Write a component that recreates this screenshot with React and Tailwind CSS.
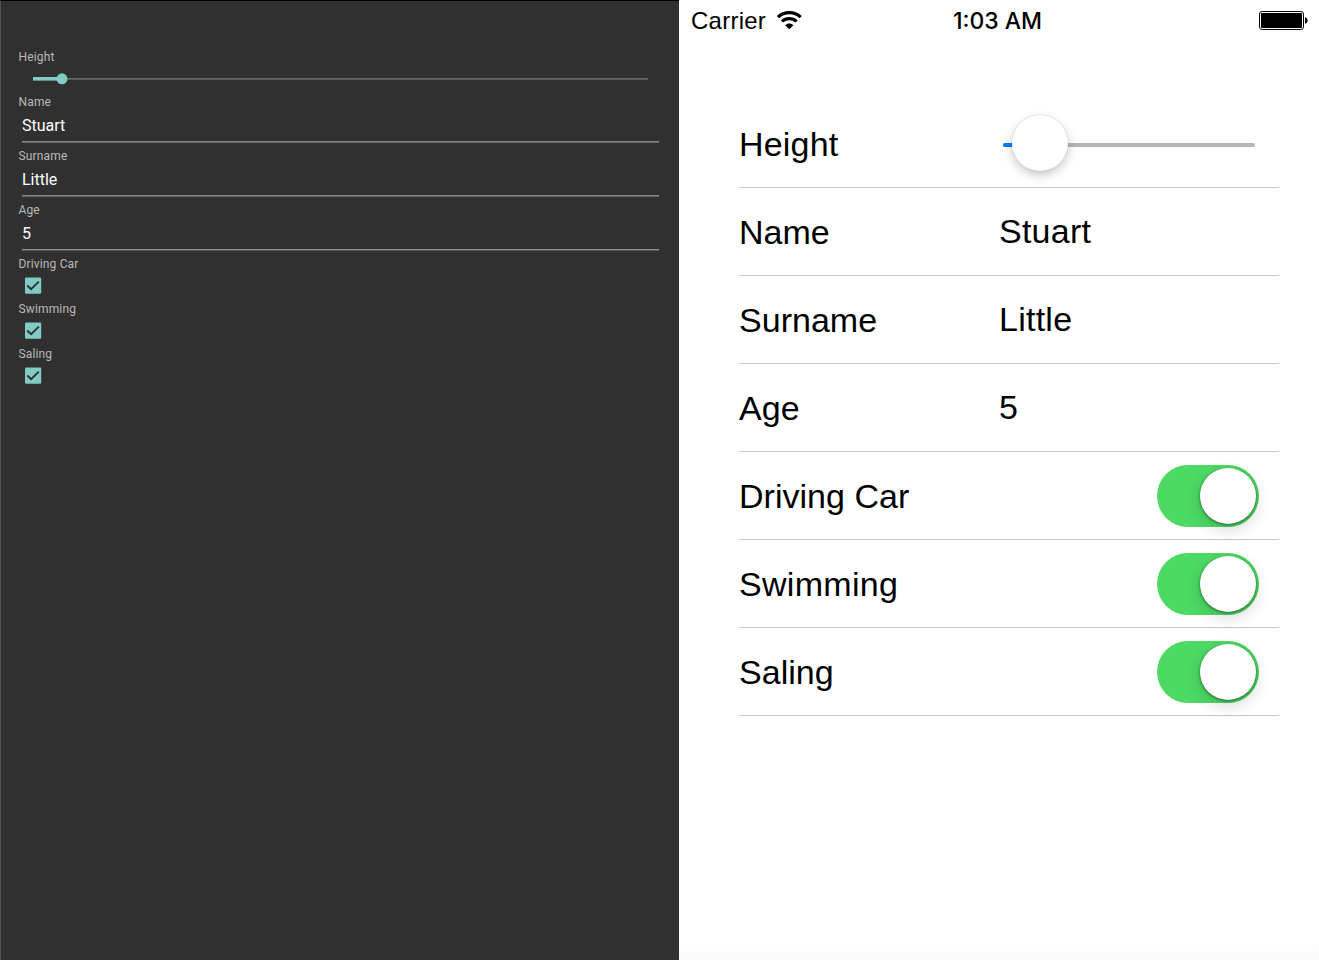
const sans = "font-['Liberation_Sans',Arial,sans-serif]";

function DroidLabel({ children }) {
  return <div className="-ml-[0.5px] h-4 text-[12px] leading-4 tracking-[0.15px] text-[#b9b9b9]">{children}</div>;
}

function DroidField({ label, value, line }) {
  return (
    <div className="h-[54px]">
      <DroidLabel>{label}</DroidLabel>
      <div className="ml-[3px] h-[31px] pt-[4px] text-[16px] leading-6 text-white">{value}</div>
      <div className={`ml-[3px] h-[2px] w-[637px] border-b ${line}`} />
    </div>
  );
}

function DroidCheck({ label }) {
  return (
    <div className="h-[45px]">
      <DroidLabel>{label}</DroidLabel>
      <svg className="ml-[6px] mt-[5px]" width="17" height="18" viewBox="0 0 17 18">
        <rect x="0" y="0.5" width="16.2" height="16.3" rx="1.2" fill="#80cbc4" />
        <path d="M2.3 8.5 L6.1 12.2 L13.8 4.6" fill="none" stroke="#303030" strokeWidth="2" />
      </svg>
    </div>
  );
}

function AndroidPanel() {
  return (
    <section className="h-[960px] w-[679px] shrink-0 border-l border-t border-l-[#505050] border-t-black bg-[#303030] pl-[18px] pt-12 font-[Roboto,sans-serif]">
      <div className="h-[45px]">
        <DroidLabel>Height</DroidLabel>
        <svg className="ml-[14px] mt-[5px]" width="616" height="18" viewBox="0 0 616 18">
          <rect x="0" y="8" width="615" height="1" fill="#646565" />
          <rect x="0" y="9" width="615" height="1" fill="#575858" />
          <rect x="0" y="7" width="29" height="3.6" fill="#80cbc4" />
          <circle cx="29" cy="8.8" r="5.5" fill="#80cbc4" />
        </svg>
      </div>
      <DroidField label="Name" value="Stuart" line="bg-[#858585] border-[#646464]" />
      <DroidField label="Surname" value="Little" line="bg-[#858585] border-[#646464]" />
      <DroidField label="Age" value="5" line="bg-[#8c8c8c] border-[#5a5a5a]" />
      <DroidCheck label="Driving Car" />
      <DroidCheck label="Swimming" />
      <DroidCheck label="Saling" />
    </section>
  );
}

function PhoneRow({ label, tracking = "tracking-[0.02px]", children }) {
  return (
    <div className="flex h-[88px] items-center border-b border-[#c8c7cc] text-[34px] leading-[40px]">
      <div className={`w-[260px] pt-px ${tracking}`}>{label}</div>
      {children}
    </div>
  );
}

function PhoneValue({ children }) {
  return <span className="-mt-[2px] tracking-[0.25px]">{children}</span>;
}

function Toggle() {
  return (
    <div className="ml-auto mr-5 mt-px flex h-[62px] w-[102px] items-center justify-end rounded-full bg-[#4cd964] pr-[3px]">
      <div className="size-14 rounded-full bg-white shadow-[0_1px_3px_rgba(0,0,0,0.5),0_6px_16px_rgba(0,0,0,0.15)]" />
    </div>
  );
}

function PhonePanel() {
  return (
    <section className={`flex h-[960px] w-[640px] shrink-0 flex-col bg-white text-black ${sans}`}>
      <header className="grid h-10 grid-cols-3 items-center pl-3 pr-[11px] pt-[2px] text-[24px]">
        <div className="flex items-center">
          <span className="tracking-[0.25px]">Carrier</span>
          <svg className="mb-[2px] ml-[10px]" width="26" height="20" viewBox="0 0 26 20">
            <path d="M1.9 7.1 C8.2 1.2 18.4 1.2 24.7 7.1" fill="none" stroke="#000" strokeWidth="3.2" />
            <path d="M6 11.5 C10 7.7 16.6 7.7 20.6 11.5" fill="none" stroke="#000" strokeWidth="3.1" />
            <path d="M9.2 15.2 C11.3 12.9 15.3 12.9 17.4 15.2 L13.3 19.2 Z" fill="#000" />
          </svg>
        </div>
        <span className="whitespace-nowrap pr-[4px] text-center font-[Inter,'Liberation_Sans',sans-serif] text-[23px] font-medium">1:03 AM</span>
        <svg className="mb-[2px] ml-auto" width="50" height="20" viewBox="0 0 50 20">
          <rect x="1.5" y="1.5" width="44" height="18" rx="2.6" fill="none" stroke="#000" />
          <rect x="3" y="3" width="41" height="15" rx="0.8" fill="#000" />
          <path d="M47 7.2 C50.5 8 50.5 13 47 13.8 Z" fill="#000" />
        </svg>
      </header>
      <main className="ml-[60px] mt-[60px] w-[540px]">
        <PhoneRow label="Height" tracking="tracking-[0.2px]">
          <svg className="ml-1 mt-[2px] overflow-visible" width="252" height="4" viewBox="0 0 252 4">
            <rect width="252" height="4" rx="2" fill="#b6b6b6" />
            <rect width="37" height="4" rx="2" fill="#007aff" />
            <circle className="drop-shadow-[0_4px_5px_rgba(0,0,0,0.22)]" cx="37" cy="0" r="28.2" fill="#fff" stroke="#000" strokeOpacity="0.12" strokeWidth="0.7" />
          </svg>
        </PhoneRow>
        <PhoneRow label="Name"><PhoneValue>Stuart</PhoneValue></PhoneRow>
        <PhoneRow label="Surname"><PhoneValue>Little</PhoneValue></PhoneRow>
        <PhoneRow label="Age"><PhoneValue>5</PhoneValue></PhoneRow>
        <PhoneRow label="Driving Car"><Toggle /></PhoneRow>
        <PhoneRow label="Swimming" tracking="tracking-[0.3px]"><Toggle /></PhoneRow>
        <PhoneRow label="Saling"><Toggle /></PhoneRow>
      </main>
      <div className="mt-auto h-5 bg-linear-to-b from-white to-[#fafafa]" />
    </section>
  );
}

export default function App() {
  return (
    <div className="flex h-[960px] w-[1319px] overflow-hidden">
      <AndroidPanel />
      <PhonePanel />
    </div>
  );
}
